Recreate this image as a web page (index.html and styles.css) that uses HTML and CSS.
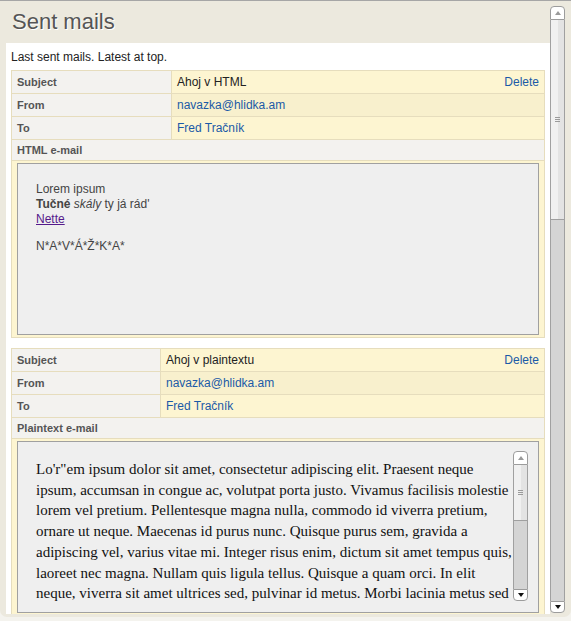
FILE: index.html
```html
<!DOCTYPE html>
<html lang="cs">
<head>
<meta charset="utf-8">
<title>Sent mails</title>
<link rel="stylesheet" href="styles.css">
</head>
<body>
<div class="dialog">
  <div class="viewport">
    <h1 class="title">Sent mails</h1>
    <div class="page">
      <p class="intro">Last sent mails. Latest at top.</p>

      <table class="mail mail--html">
        <colgroup><col class="col-key"><col></colgroup>
        <tr class="row"><th>Subject</th><td><a class="delete" href="#">Delete</a>Ahoj v HTML</td></tr>
        <tr class="row row--alt"><th>From</th><td><a href="#">navazka@hlidka.am</a></td></tr>
        <tr class="row"><th>To</th><td><a href="#">Fred Tračník</a></td></tr>
        <tr class="section"><th colspan="2">HTML e-mail</th></tr>
        <tr class="body-row"><td colspan="2">
          <div class="frame frame--html">
            <p>Lorem ipsum<br><b>Tučné</b> <i>skály</i> ty já rád'<br><a class="visited" href="#">Nette</a></p>
            <p>N*A*V*Á*Ž*K*A*</p>
          </div>
        </td></tr>
      </table>

      <table class="mail mail--plain">
        <colgroup><col class="col-key"><col></colgroup>
        <tr class="row"><th>Subject</th><td><a class="delete" href="#">Delete</a>Ahoj v plaintextu</td></tr>
        <tr class="row row--alt"><th>From</th><td><a href="#">navazka@hlidka.am</a></td></tr>
        <tr class="row"><th>To</th><td><a href="#">Fred Tračník</a></td></tr>
        <tr class="section"><th colspan="2">Plaintext e-mail</th></tr>
        <tr class="body-row"><td colspan="2">
          <div class="frame frame--plain">
            <div class="plain">
              <div class="plain-text">Lo'r"em ipsum dolor sit amet, consectetur adipiscing elit. Praesent neque<br>ipsum, accumsan in congue ac, volutpat porta justo. Vivamus facilisis molestie<br>lorem vel pretium. Pellentesque magna nulla, commodo id viverra pretium,<br>ornare ut neque. Maecenas id purus nunc. Quisque purus sem, gravida a<br>adipiscing vel, varius vitae mi. Integer risus enim, dictum sit amet tempus quis,<br>laoreet nec magna. Nullam quis ligula tellus. Quisque a quam orci. In elit<br>neque, viverra sit amet ultrices sed, pulvinar id metus. Morbi lacinia metus sed</div>
              <div class="sb sb--inner">
                <div class="sb-btn sb-btn--up"><span class="arrow arrow--up"></span></div>
                <div class="sb-thumb"><span class="sb-grip"></span></div>
                <div class="sb-track"></div>
                <div class="sb-btn sb-btn--down"><span class="arrow arrow--down"></span></div>
              </div>
            </div>
          </div>
        </td></tr>
      </table>
    </div>
  </div>
  <div class="sb sb--page">
    <div class="sb-btn sb-btn--up"><span class="arrow arrow--up"></span></div>
    <div class="sb-thumb"><span class="sb-grip"></span></div>
    <div class="sb-track"></div>
    <div class="sb-btn sb-btn--down"><span class="arrow arrow--down"></span></div>
  </div>
</div>
</body>
</html>
```

FILE: styles.css
```css
* { box-sizing: border-box; }

html, body { margin: 0; padding: 0; }

body {
  background: #f4f3ee;
  font-family: "Liberation Sans", Arial, sans-serif;
  font-size: 12px;
  color: #222;
}

.dialog {
  height: 617px;
  border-top: 1px solid #a6a6a6;
  background: #ece9de;
  border-radius: 0 0 7px 7px;
  padding: 5px 6px 0 6px;
  display: flex;
  align-items: flex-start;
}

.viewport {
  width: 544px;
  height: 608px;
  overflow: hidden;
  background: #fff;
  display: flex;
  flex-direction: column;
}

.title {
  margin: 0;
  flex: none;
  height: 37px;
  background: #ece9de;
  padding: 3px 0 0 6px;
  font-size: 22px;
  line-height: 26px;
  font-weight: normal;
  color: #555;
  text-shadow: 1px 1px 0 #fff;
}

.page { padding: 6px 5px 0; }

.intro {
  margin: 0 0 5px;
  line-height: 16px;
  color: #222;
}

.mail {
  width: 534px;
  border-collapse: collapse;
  table-layout: fixed;
  margin-bottom: 10px;
}

.mail--html .col-key { width: 160px; }
.mail--plain .col-key { width: 149px; }

.mail th,
.mail td {
  border: 1px solid #e6ddbd;
  padding: 0 5px;
  height: 23px;
  text-align: left;
  vertical-align: middle;
}

.mail th {
  background: #f3f2ef;
  color: #555;
  font-size: 11px;
  font-weight: bold;
}

.mail td { background: #fdf5d1; color: #222; }
.row--alt td { background: #f8f0cd; }
.section th { height: 21px; }
.body-row td { padding: 2px 5px; height: auto; }

.mail a { color: #1b5aa7; text-decoration: none; }
.delete { float: right; }

.frame {
  border: 1px solid #a0a0a0;
  background: #efefef;
  height: 172px;
}

.frame--html { padding: 6px 18px 0; }

.frame p {
  margin: 12px 0;
  line-height: 15px;
  color: #444;
}

.frame a.visited { color: #551a8b; text-decoration: underline; }

.frame--plain {
  padding: 9px 10px 10px 9px;
  display: flex;
}

.plain {
  flex: 1;
  display: flex;
  height: 150px;
  overflow: hidden;
}

.plain-text {
  flex: 1;
  padding: 8px 9px 0;
  font-family: "Liberation Serif", "Times New Roman", serif;
  font-size: 15px;
  line-height: 20.7px;
  white-space: nowrap;
  color: #111;
  overflow: hidden;
}

/* scrollbars */
.sb {
  flex: none;
  width: 15px;
  display: flex;
  flex-direction: column;
}

.sb--page { height: 607px; }
.sb--inner { height: 150px; }

.sb-btn {
  flex: none;
  height: 14px;
  background: #fff;
  border: 1px solid #9c9c9c;
  display: flex;
  align-items: center;
  justify-content: center;
}

.sb-btn--up { border-radius: 4px 4px 0 0; }
.sb-btn--down { height: 12px; border-radius: 0 0 4px 4px; }

.arrow {
  width: 0;
  height: 0;
  border-left: 3.5px solid transparent;
  border-right: 3.5px solid transparent;
}

.arrow--up { border-bottom: 4px solid #9a9a9a; }
.arrow--down { border-top: 4px solid #111; }

.sb-thumb {
  flex: none;
  background: linear-gradient(to right, #f0f0f0 0 55%, #e3e3e3 55% 100%);
  border-left: 1px solid #a0a0a0;
  border-right: 1px solid #a0a0a0;
  border-bottom: 1px solid #a0a0a0;
  display: flex;
  align-items: center;
  justify-content: center;
}

.sb--page .sb-thumb { height: 200px; }
.sb--inner .sb-thumb { height: 56px; }

.sb-grip {
  width: 5px;
  height: 5px;
  background: repeating-linear-gradient(to bottom, #9a9a9a 0 1px, transparent 1px 2px);
}

.sb-track {
  flex: 1;
  background: #d4d4d4;
  border-left: 1px solid #a0a0a0;
  border-right: 1px solid #a0a0a0;
}
```
